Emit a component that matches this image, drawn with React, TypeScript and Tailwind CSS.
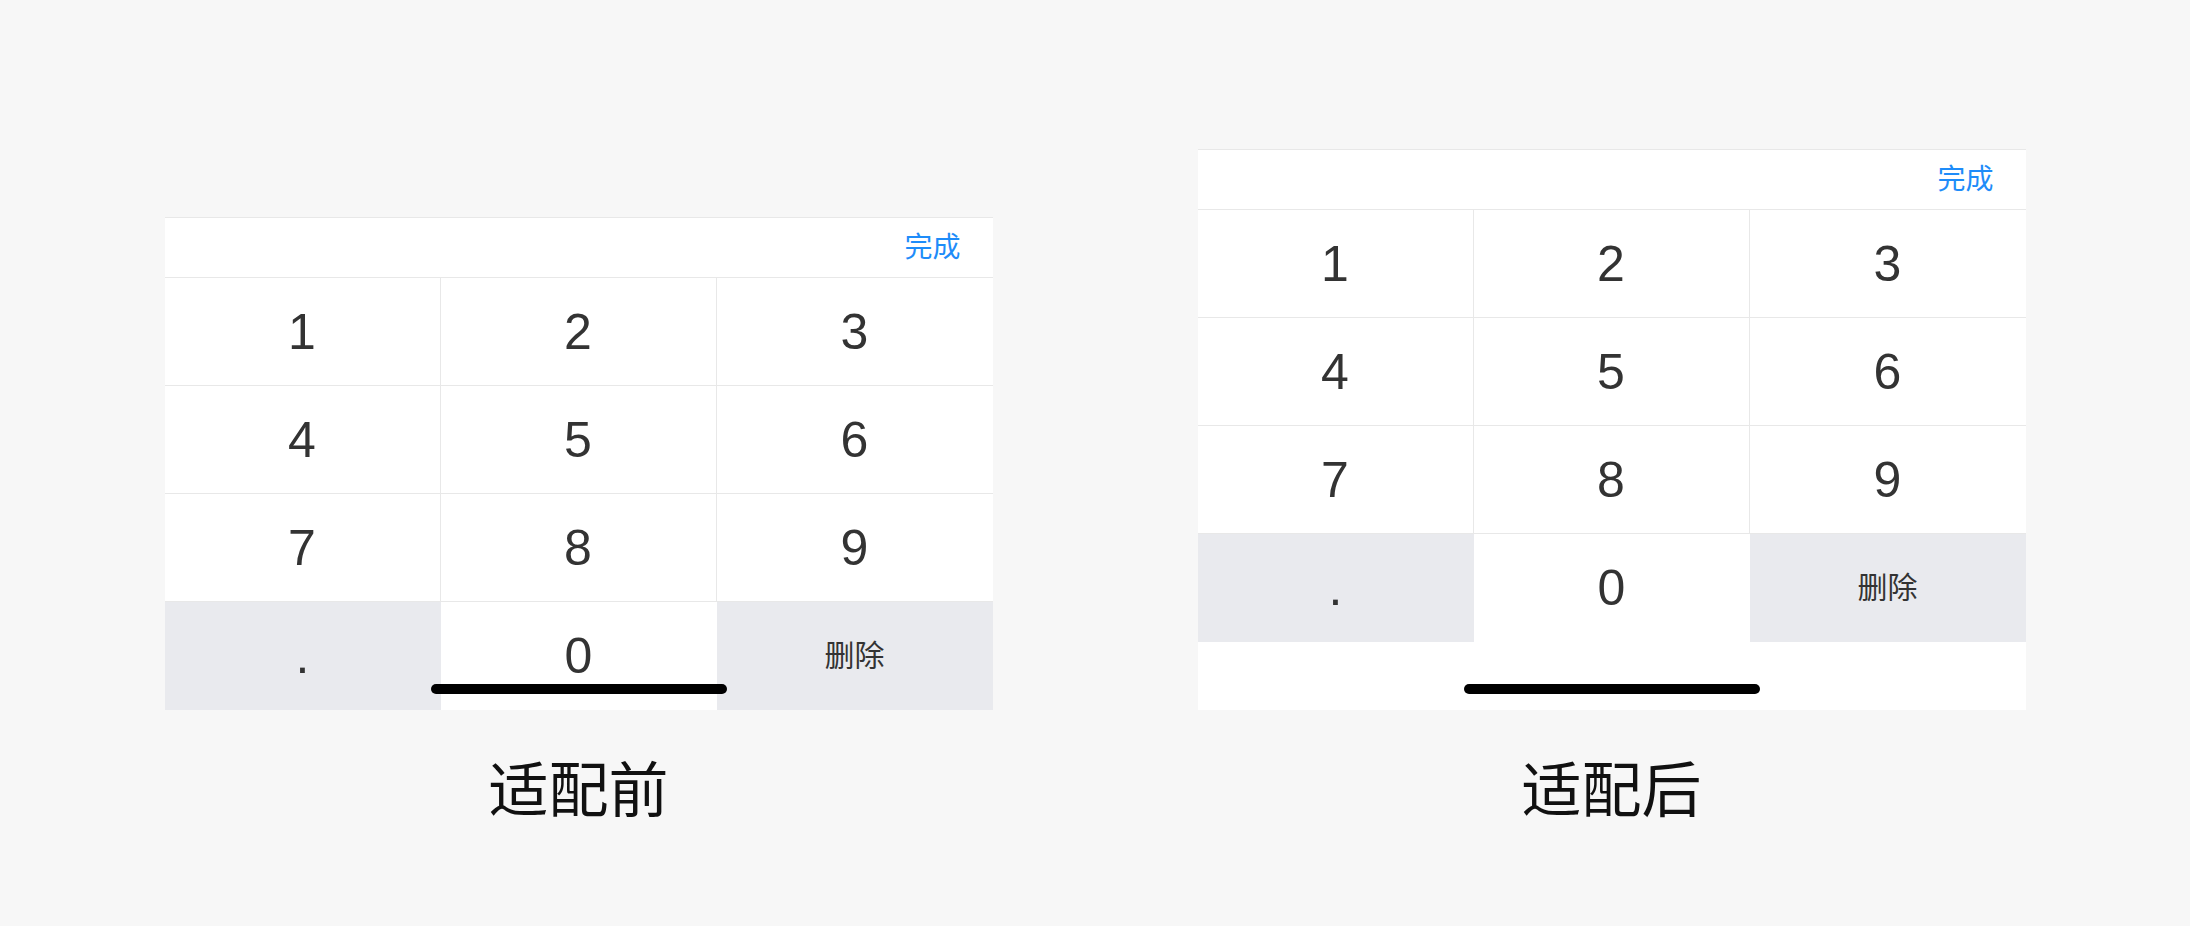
const keys = [
  ["1", "2", "3"],
  ["4", "5", "6"],
  ["7", "8", "9"],
]

function Keypad({ safeArea }: { safeArea: boolean }) {
  return (
    <div className="relative w-[828px] bg-white border-t border-[#e8e8e8]">
      {/* toolbar */}
      <div className="h-[60px] border-b border-[#e8e8e8] flex items-center justify-end pr-[32px]">
        <span className="text-[28px] leading-none text-[#1e8cf9]">完成</span>
      </div>

      {keys.map((row, i) => (
        <div key={i} className="grid grid-cols-3 h-[108px] border-b border-[#e8e8e8]">
          {row.map((k, j) => (
            <div
              key={k}
              className={`flex items-center justify-center text-[50px] leading-none text-[#333] ${
                j < 2 ? "border-r border-[#e8e8e8]" : ""
              }`}
            >
              {k}
            </div>
          ))}
        </div>
      ))}

      <div className="grid grid-cols-3 h-[108px]">
        <div className="flex items-center justify-center bg-[#e9eaee] text-[50px] leading-none text-[#333]">.</div>
        <div className="flex items-center justify-center text-[50px] leading-none text-[#333]">0</div>
        <div className="flex items-center justify-center bg-[#e9eaee] text-[30px] leading-none text-[#333]">删除</div>
      </div>

      {safeArea && <div className="h-[68px]"></div>}

      {/* home indicator */}
      <div className="absolute bottom-[16px] left-1/2 -translate-x-1/2 w-[296px] h-[10px] rounded-full bg-black"></div>
    </div>
  )
}

export default function App() {
  return (
    <div
      className="w-[2190px] h-[926px] bg-[#f7f7f7] flex justify-center items-end gap-[205px] pb-[104px]"
      style={{ fontFamily: '"Liberation Sans", "Noto Sans CJK SC", sans-serif' }}
    >
      <div className="flex flex-col items-center">
        <Keypad safeArea={false} />
        <div className="mt-[52px] text-[60px] leading-none text-[#111]">适配前</div>
      </div>
      <div className="flex flex-col items-center">
        <Keypad safeArea={true} />
        <div className="mt-[52px] text-[60px] leading-none text-[#111]">适配后</div>
      </div>
    </div>
  )
}
